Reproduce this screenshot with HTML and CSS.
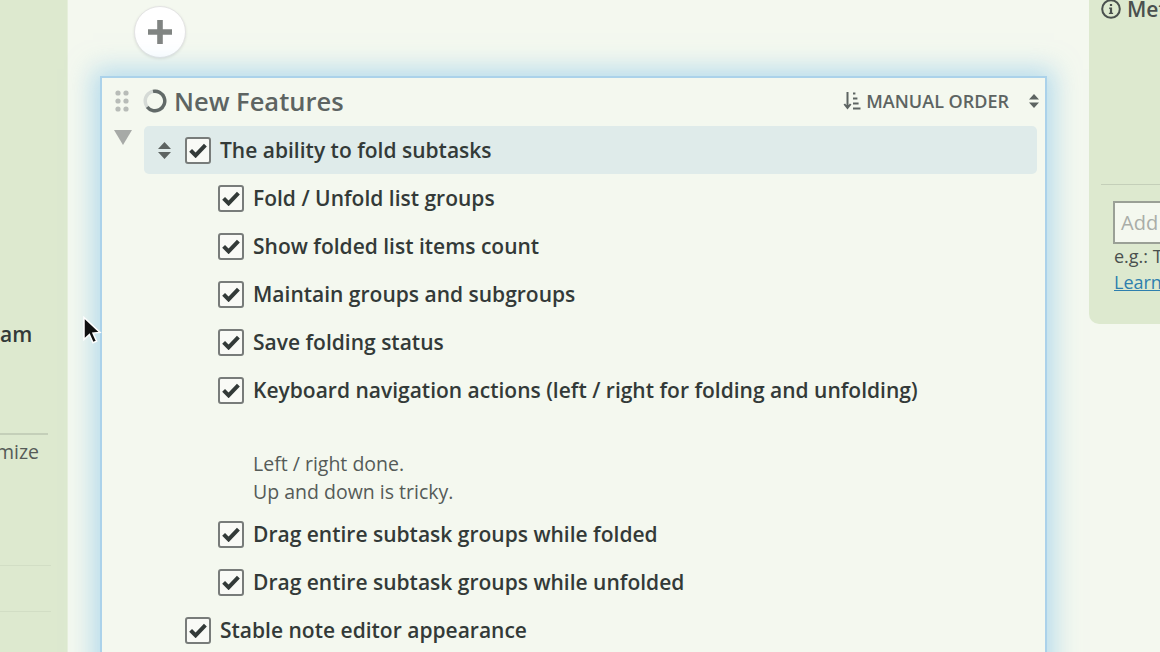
FILE: index.html
```html
<!DOCTYPE html>
<html lang="en">
<head>
<meta charset="utf-8">
<title>New Features</title>
<link rel="stylesheet" href="styles.css">
</head>
<body>
<div class="app">
  <aside class="left">
    <div class="left-team">am</div>
    <div class="left-rule"></div>
    <div class="left-mize">mize</div>
    <div class="left-rule thin first"></div>
    <div class="left-rule thin second"></div>
  </aside>
  <main class="main">
    <button class="add" type="button" aria-label="Add">
      <svg width="24" height="24" viewBox="0 0 24 24"><path class="fill-gray" d="M9.2 0h5.6v9.2H24v5.6h-9.2V24H9.2v-9.2H0V9.2h9.2z"/></svg>
    </button>
    <section class="card">
      <header class="card-head">
        <svg class="grip" width="14" height="22" viewBox="0 0 14 22"><g class="grip-dots"><circle cx="3" cy="3" r="2.6"/><circle cx="11" cy="3" r="2.6"/><circle cx="3" cy="11" r="2.6"/><circle cx="11" cy="11" r="2.6"/><circle cx="3" cy="19" r="2.6"/><circle cx="11" cy="19" r="2.6"/></g></svg>
        <svg class="ring" width="24" height="24" viewBox="0 0 24 24"><circle class="ring-bg" cx="12" cy="12" r="9.8"/><path class="ring-fg" d="M10 2.4A9.8 9.8 0 1 1 4.2 18"/></svg>
        <h1 class="title">New Features</h1>
        <div class="order">
          <svg width="18" height="18" viewBox="0 0 18 18"><path class="order-stroke" d="M4.5 0v15M1.3 12l3.2 4 3.2-4M10 1.5h2.4M10 6.5h4.4M10 11.5h5.6M10 16.5h7.5"/></svg>
          <span class="order-label">MANUAL ORDER</span>
          <svg class="order-caret" width="10" height="14" viewBox="0 0 10 14"><path class="fill-dark" d="M5 0l5 5.6H0zM5 14L0 8.4h10z"/></svg>
        </div>
      </header>
      <div class="body">
        <svg class="fold" width="18" height="15" viewBox="0 0 18 15"><path class="fill-fold" d="M0 0h18L9 15z"/></svg>
        <ul class="list">
          <li class="row active">
            <svg class="sort" width="13" height="17" viewBox="0 0 13 17"><path class="fill-dark" d="M6.5 0L13 7H0zM6.5 17L0 10h13z"/></svg>
            <span class="box"><svg width="18" height="15" viewBox="0 0 18 15"><path class="check" d="M1.6 7.4l5 5 9.8-10.2"/></svg></span>
            <span class="label">The ability to fold subtasks</span>
          </li>
          <li class="row sub"><span class="box"><svg width="18" height="15" viewBox="0 0 18 15"><path class="check" d="M1.6 7.4l5 5 9.8-10.2"/></svg></span><span class="label">Fold / Unfold list groups</span></li>
          <li class="row sub"><span class="box"><svg width="18" height="15" viewBox="0 0 18 15"><path class="check" d="M1.6 7.4l5 5 9.8-10.2"/></svg></span><span class="label">Show folded list items count</span></li>
          <li class="row sub"><span class="box"><svg width="18" height="15" viewBox="0 0 18 15"><path class="check" d="M1.6 7.4l5 5 9.8-10.2"/></svg></span><span class="label">Maintain groups and subgroups</span></li>
          <li class="row sub"><span class="box"><svg width="18" height="15" viewBox="0 0 18 15"><path class="check" d="M1.6 7.4l5 5 9.8-10.2"/></svg></span><span class="label">Save folding status</span></li>
          <li class="row sub"><span class="box"><svg width="18" height="15" viewBox="0 0 18 15"><path class="check" d="M1.6 7.4l5 5 9.8-10.2"/></svg></span><span class="label">Keyboard navigation actions (left / right for folding and unfolding)</span></li>
          <li class="note">Left / right done.<br>Up and down is tricky.</li>
          <li class="row sub"><span class="box"><svg width="18" height="15" viewBox="0 0 18 15"><path class="check" d="M1.6 7.4l5 5 9.8-10.2"/></svg></span><span class="label">Drag entire subtask groups while folded</span></li>
          <li class="row sub"><span class="box"><svg width="18" height="15" viewBox="0 0 18 15"><path class="check" d="M1.6 7.4l5 5 9.8-10.2"/></svg></span><span class="label">Drag entire subtask groups while unfolded</span></li>
          <li class="row top"><span class="box"><svg width="18" height="15" viewBox="0 0 18 15"><path class="check" d="M1.6 7.4l5 5 9.8-10.2"/></svg></span><span class="label">Stable note editor appearance</span></li>
        </ul>
      </div>
    </section>
  </main>
  <aside class="right">
    <div class="meta">
      <svg class="info" width="20" height="20" viewBox="0 0 20 20"><circle class="info-ring" cx="10" cy="10" r="8.8"/><path class="fill-info" d="M8.9 5h2.2v2.1H8.9zM8.2 8.6h2.9v5.1h1v1.4H7.9v-1.4h1V10H8.2z"/></svg>
      <span>Met</span>
    </div>
    <div class="right-rule"></div>
    <div class="add-input">Add</div>
    <div class="hint">e.g.: T</div>
    <a class="learn" href="#">Learn</a>
  </aside>
</div>
<svg class="cursor" width="20" height="30" viewBox="0 0 20 30"><path class="cursor-path" d="M2 1.5v22l5.4-5 3.6 8.2 3.6-1.6-3.6-8 7-.6z"/></svg>
</body>
</html>
```
FILE: styles.css
```css
* { box-sizing: border-box; }
html, body { margin: 0; height: 100%; overflow: hidden; }
body { background: #f4f8ef; font-family: "Open Sans", sans-serif; color: #333a38; }
ul { list-style: none; margin: 0; padding: 0; }
.app { display: flex; width: 1160px; height: 652px; overflow: hidden; }

.left { flex: 0 0 68px; background: #dde9cf; display: flex; flex-direction: column; border-right: 1px solid #e6efdb; overflow: hidden; }
.left-team { margin-top: 319px; height: 30px; font-size: 21px; line-height: 30px; font-weight: 600; color: #333a38; }
.left-rule { margin-top: 84px; width: 48px; height: 2px; background: #c4cfb9; }
.left-mize { font-size: 19.5px; line-height: 26px; margin: 4px 0 0 -4px; color: #555b58; }
.left-rule.thin { width: 51px; height: 1px; background: #d2dec5; }
.left-rule.first { margin-top: 100px; }
.left-rule.second { margin-top: 45px; }

.main { flex: 0 0 1021px; padding: 6px 0 0 32px; }
.add { display: flex; align-items: center; justify-content: center; width: 52px; height: 52px; margin-left: 34px; padding: 0; border-radius: 50%; background: #fff; border: 1px solid #e4e4e4; box-shadow: 0 1px 3px rgba(0,0,0,.1); }
.fill-gray { fill: #808482; }

.card { width: 947px; height: 700px; margin-top: 18px; background: #f4f8ef; border: 2px solid #abd2ea; box-shadow: 0 0 24px 7px rgba(140,200,235,.6); }
.card-head { display: flex; align-items: center; height: 48px; padding: 0 6px 2px 13px; }
.grip { flex: none; }
.grip-dots { fill: #b8bcb8; }
.ring { margin-left: 14px; flex: none; }
.ring-bg { fill: none; stroke: #d5dad6; stroke-width: 3.4; }
.ring-fg { fill: none; stroke: #626a68; stroke-width: 3.4; }
.title { margin: 0 0 0 7px; font-size: 25.5px; font-weight: 600; line-height: 34px; color: #5d6462; }
.order { margin-left: auto; display: flex; align-items: center; }
.order-stroke { fill: none; stroke: #5d6462; stroke-width: 2; }
.order-label { margin-left: 5px; font-size: 18px; font-weight: 600; color: #5d6462; line-height: 24px; }
.order-caret { margin-left: 20px; }
.fill-dark { fill: #5d6462; }

.body { display: flex; align-items: flex-start; padding-left: 12px; }
.fold { margin-top: 4px; flex: none; }
.fill-fold { fill: #a7aaa7; }
.list { flex: 1; margin-left: 12px; padding-right: 8px; }
.row { display: flex; align-items: center; height: 48px; font-size: 21px; font-weight: 600; color: #333a38; }
.row.active { background: #dfebea; border-radius: 5px; padding-left: 14px; }
.row.top { padding-left: 41px; }
.row.sub { padding-left: 74px; }
.sort { margin-right: 14px; flex: none; }
.box { flex: none; display: flex; align-items: center; justify-content: center; width: 26px; height: 27px; border: 2px solid #787c7a; border-radius: 3px; background: #f9faf6; margin-right: 9px; }
.check { fill: none; stroke: #333a38; stroke-width: 4; }
.note { padding: 36px 0 0 109px; height: 96px; font-size: 19.5px; line-height: 28px; color: #555b58; }

.right { flex: 0 0 71px; height: 324px; background: #dde9cf; border-bottom-left-radius: 10px; padding-left: 12px; display: flex; flex-direction: column; white-space: nowrap; overflow: hidden; }
.meta { display: flex; align-items: center; gap: 6px; height: 20px; margin-top: -1px; font-size: 21px; font-weight: 600; color: #4a504e; }
.info { flex: none; }
.info-ring { fill: none; stroke: #4a504e; stroke-width: 2; }
.fill-info { fill: #4a504e; }
.right-rule { margin-top: 165px; height: 1px; background: #c4cfb9; }
.add-input { margin: 16px -20px 0 12px; height: 43px; border: 2px solid #9aa096; background: #f4f8ef; padding-left: 6px; font-size: 20px; line-height: 39px; color: #a9ada8; }
.hint { margin-left: 13px; font-size: 18px; line-height: 25px; color: #4a504e; }
.learn { margin-left: 13px; font-size: 18px; line-height: 26px; color: #2e7fae; }

.cursor { position: absolute; left: 82px; top: 316px; overflow: visible; }
.cursor-path { fill: #111; stroke: #fff; stroke-width: 1.5; }
```
